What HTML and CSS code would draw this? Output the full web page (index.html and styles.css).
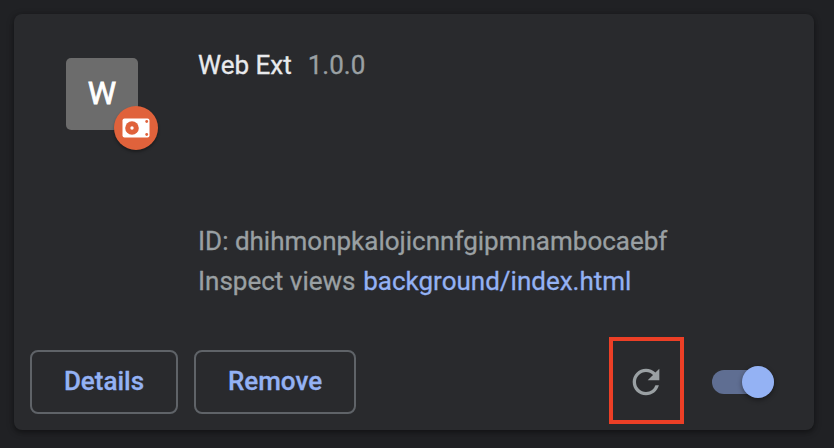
FILE: index.html
```html
<!DOCTYPE html>
<html lang="en">
<head>
<meta charset="utf-8">
<title>Extensions</title>
<link rel="stylesheet" href="styles.css">
</head>
<body>
<main class="card">
  <section class="summary">
    <div class="icon">W
      <span class="badge">
        <svg width="28" height="20" viewBox="0 0 28 20" aria-hidden="true">
          <rect x=".5" y=".5" width="27" height="19" rx="2" fill="#fff"/>
          <circle cx="10" cy="10" r="6.8" fill="#e0623b"/>
          <circle cx="10" cy="10" r="1.7" fill="#fff"/>
          <circle cx="24.7" cy="3.5" r="1.4" fill="#e0623b"/>
          <circle cx="24.7" cy="16.5" r="1.4" fill="#e0623b"/>
        </svg>
      </span>
    </div>
    <div class="content">
      <div class="heading"><span class="name">Web Ext</span><span class="version">1.0.0</span></div>
      <div class="info">
        <div class="id">ID: dhihmonpkalojicnnfgipmnambocaebf</div>
        <div class="views">Inspect views <a class="link">background/index.html</a></div>
      </div>
    </div>
  </section>
  <footer class="actions">
    <button class="button details">Details</button>
    <button class="button remove">Remove</button>
    <div class="reload">
      <svg class="reload-icon" width="40" height="40" viewBox="0 0 24 24" aria-hidden="true"><path fill="#9aa0a3" d="M17.65 6.35A7.958 7.958 0 0 0 12 4c-4.42 0-7.99 3.58-7.99 8s3.57 8 7.99 8c3.73 0 6.84-2.55 7.73-6h-2.08A5.99 5.99 0 0 1 12 18c-3.31 0-6-2.69-6-6s2.69-6 6-6c1.66 0 3.14.69 4.22 1.78L13 11h7V4l-2.35 2.35z"/></svg>
    </div>
    <div class="toggle"><span class="knob"></span></div>
  </footer>
</main>
</body>
</html>
```

FILE: styles.css
```css
* { box-sizing: border-box; }

body {
  margin: 0;
  padding: 14px;
  height: 448px;
  overflow: hidden;
  background: #202124;
  color: #9aa0a3;
  font: 400 26px/40px Roboto, sans-serif;
  -webkit-text-stroke: .3px currentColor;
}

.card {
  display: flex;
  flex-direction: column;
  width: 800px;
  height: 416px;
  border-radius: 8px;
  background: #292a2d;
  box-shadow: 0 2px 4px rgba(0, 0, 0, .3), 0 2px 6px 2px rgba(0, 0, 0, .15);
}

.summary {
  display: flex;
  flex: 1;
  padding: 31px 52px 0;
}

.icon {
  position: relative;
  width: 72px;
  height: 72px;
  margin: 13px 60px 0 0;
  border-radius: 5px;
  background: #6c6c6c;
  color: #fff;
  font: 400 32px/71px Roboto, sans-serif;
  -webkit-text-stroke: .8px currentColor;
  text-align: center;
}

.badge {
  position: absolute;
  top: 48px;
  left: 48px;
  display: flex;
  align-items: center;
  justify-content: center;
  width: 44px;
  height: 44px;
  border-radius: 50%;
  background: #e0623b;
  box-shadow: 0 2px 3px rgba(0, 0, 0, .35);
}

.content { white-space: nowrap; }

.heading {
  display: flex;
  gap: 16px;
  height: 176px;
}

.name { color: #e8eaed; }

.link {
  margin-left: 1.3px;
  color: #94b2f4;
}

.actions {
  display: flex;
  align-items: center;
  height: 99px;
  padding: 0 40px 0 16px;
}

.button {
  height: 64px;
  margin: 3px 16px 0 0;
  padding: 0 0 2px;
  border: 2px solid #5f6368;
  border-radius: 8px;
  background: none;
  color: #94b2f4;
  font: 500 26px/40px Roboto, sans-serif;
  -webkit-text-stroke: .3px currentColor;
}

.details { width: 148px; }
.remove { width: 162px; }

.reload {
  display: flex;
  align-items: center;
  justify-content: center;
  width: 75px;
  height: 87px;
  margin: 0 28px 0 auto;
  padding: 2px 1px 0 0;
  border: 4px solid #ec3f26;
}

.toggle {
  display: flex;
  align-items: center;
  justify-content: flex-end;
  width: 62px;
  height: 24px;
  margin-top: 3px;
  border-radius: 12px;
  background: #5f6e92;
}

.knob {
  width: 32px;
  height: 32px;
  flex: none;
  border-radius: 50%;
  background: #94b2f4;
  box-shadow: 0 2px 5px rgba(0, 0, 0, .4);
}
```
